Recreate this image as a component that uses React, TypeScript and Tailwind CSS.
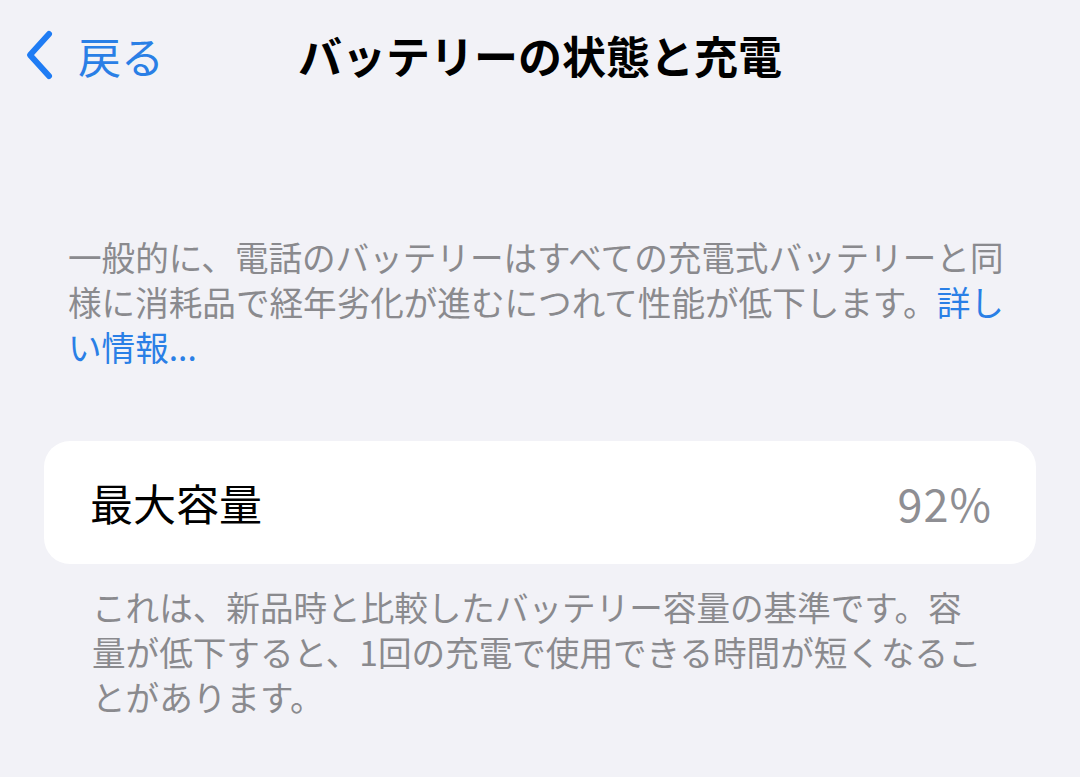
import React from 'react';

const Chevron = () => (
  <svg width="32" height="52" viewBox="0 0 32 52" fill="none">
    <path
      d="M27 5 L8 26 L27 47"
      stroke="#1f7cf4"
      strokeWidth="6"
      strokeLinecap="round"
      strokeLinejoin="round"
    />
  </svg>
);

const App = () => {
  return (
    <div
      className="min-h-[777px] w-full bg-[#f2f2f7]"
      style={{ fontFamily: '"Noto Sans CJK JP", "Noto Sans", sans-serif' }}
    >
      <header className="grid h-[110px] grid-cols-[1fr_auto_1fr] items-center">
        <div className="flex items-center gap-[24px] pl-[22px]">
          <Chevron />
          <span className="text-[43px] leading-none text-[#2a7fe6]">戻る</span>
        </div>
        <h1 className="text-[44px] font-bold leading-none text-black">
          バッテリーの状態と充電
        </h1>
        <div />
      </header>

      <p className="mt-[124px] pl-[68px] text-[33.6px] leading-[45px] text-[#8a8a8e]">
        <span className="block whitespace-nowrap">
          一般的に、電話のバッテリーはすべての充電式バッテリーと同
        </span>
        <span className="block whitespace-nowrap">
          様に消耗品で経年劣化が進むにつれて性能が低下します。
          <span className="text-[#2a7fe6]">詳し</span>
        </span>
        <span className="block whitespace-nowrap text-[#2a7fe6]">い情報...</span>
      </p>

      <div className="mx-[44px] mt-[72px] flex h-[123px] items-center justify-between rounded-[26px] bg-white pl-[46px] pr-[44px]">
        <span className="text-[43px] leading-none text-black">最大容量</span>
        <span className="text-[45px] leading-none tracking-[1px] text-[#8e8e93]">92%</span>
      </div>

      <p className="mt-[20px] pl-[92px] text-[33.6px] leading-[45px] text-[#8a8a8e]">
        <span className="block whitespace-nowrap">
          これは、新品時と比較したバッテリー容量の基準です。容
        </span>
        <span className="block whitespace-nowrap">
          量が低下すると、1回の充電で使用できる時間が短くなるこ
        </span>
        <span className="block whitespace-nowrap">とがあります。</span>
      </p>
    </div>
  );
};

export default App;
